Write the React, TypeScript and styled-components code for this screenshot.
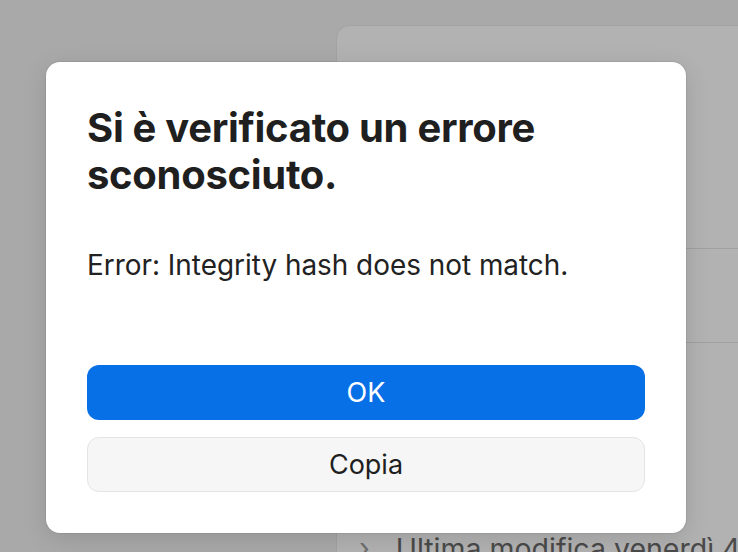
import React from "react";
import styled, { createGlobalStyle } from "styled-components";

const Global = createGlobalStyle`
  html, body { margin: 0; padding: 0; }
  body {
    width: 738px;
    height: 552px;
    overflow: hidden;
    background: #f4f3f4;
    font-family: Inter, "Noto Sans", "Liberation Sans", sans-serif;
  }
`;

const Page = styled.div`
  position: relative;
  width: 738px;
  height: 552px;
  overflow: hidden;
`;

const AppPanel = styled.section`
  margin: 25px 0 0 336px;
  height: 600px;
  background: #ffffff;
  border: 1px solid #ebeaeb;
  border-right: none;
  border-radius: 14px 0 0 0;
  display: flex;
  flex-direction: column;
`;

const PanelRow = styled.div<{ $h: number; $line?: boolean }>`
  height: ${(p) => p.$h}px;
  flex: none;
  border-bottom: ${(p) => (p.$line ? "1px solid #e6e5e6" : "none")};
  display: flex;
  align-items: flex-start;
  gap: 26px;
  padding-left: 22px;
`;

const Chevron = styled.span`
  color: #9e9e9e;
  font-size: 28px;
  line-height: 31px;
`;

const RowText = styled.span`
  color: #6a6a6a;
  font-size: 28.5px;
  line-height: 31px;
  white-space: nowrap;
`;

const Overlay = styled.div`
  position: absolute;
  inset: 0;
  background: rgba(0, 0, 0, 0.3);
  display: flex;
  align-items: flex-start;
  padding: 62px 0 0 46px;
`;

const Dialog = styled.div`
  width: 640px;
  box-sizing: border-box;
  background: #ffffff;
  border-radius: 14px;
  padding: 42px 41px 41px 41px;
  box-shadow: 0 0 0 1px rgba(0, 0, 0, 0.06), 0 6px 24px rgba(0, 0, 0, 0.12);
  display: flex;
  flex-direction: column;
`;

const Title = styled.h1`
  margin: 0;
  font-size: 40px;
  line-height: 47px;
  font-weight: 700;
  color: #1f1f1f;
  letter-spacing: -0.3px;
`;

const Message = styled.p`
  margin: 49px 0 0 0;
  font-size: 27.9px;
  line-height: 36px;
  font-weight: 400;
  color: #222222;
`;

const Actions = styled.div`
  margin-top: 82px;
  display: flex;
  flex-direction: column;
  gap: 17px;
`;

const Button = styled.button<{ $primary?: boolean }>`
  height: 55px;
  width: 100%;
  border-radius: 12px;
  font-family: inherit;
  font-size: 27px;
  font-weight: 400;
  cursor: pointer;
  background: ${(p) => (p.$primary ? "#0870e6" : "#f6f6f6")};
  color: ${(p) => (p.$primary ? "#ffffff" : "#1f1f1f")};
  border: ${(p) => (p.$primary ? "none" : "1.5px solid #e4e4e4")};
`;

export default function App() {
  return (
    <>
      <Global />
      <Page>
        <AppPanel>
          <PanelRow $h={222} $line />
          <PanelRow $h={93} $line />
          <PanelRow $h={190} />
          <PanelRow $h={40}>
            <Chevron>›</Chevron>
            <RowText>Ultima modifica venerdì 4</RowText>
          </PanelRow>
        </AppPanel>
        <Overlay>
          <Dialog role="alertdialog">
            <Title>Si è verificato un errore sconosciuto.</Title>
            <Message>Error: Integrity hash does not match.</Message>
            <Actions>
              <Button $primary>OK</Button>
              <Button>Copia</Button>
            </Actions>
          </Dialog>
        </Overlay>
      </Page>
    </>
  );
}
